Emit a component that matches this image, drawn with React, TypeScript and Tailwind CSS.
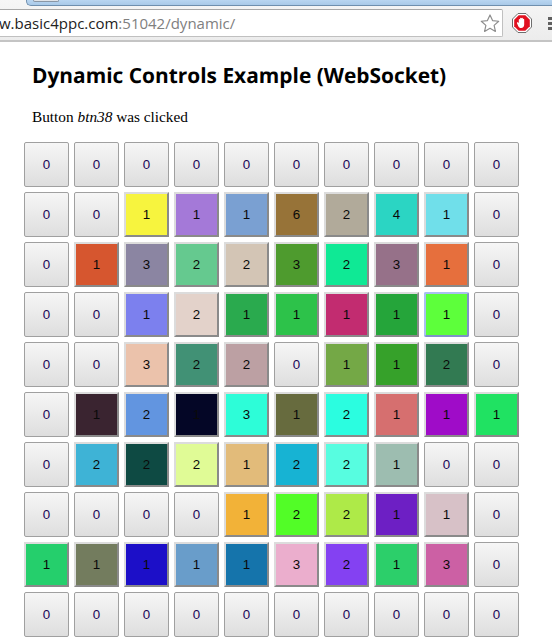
const Z = "";
const rows: [string, string][][] = [
  [["0", Z], ["0", Z], ["0", Z], ["0", Z], ["0", Z], ["0", Z], ["0", Z], ["0", Z], ["0", Z], ["0", Z]],
  [["0", Z], ["0", Z], ["1", "bg-[#f7f43e]"], ["1", "bg-[#a479d8]"], ["1", "bg-[#7aa0d2]"], ["6", "bg-[#977338]"], ["2", "bg-[#b1aa9a]"], ["4", "bg-[#2bd5c3]"], ["1", "bg-[#70dfea]"], ["0", Z]],
  [["0", Z], ["1", "bg-[#d6562f]"], ["3", "bg-[#8b85a2]"], ["2", "bg-[#65c98f]"], ["2", "bg-[#d3c5b5]"], ["3", "bg-[#4e9b2e]"], ["2", "bg-[#0fe995]"], ["3", "bg-[#967189]"], ["1", "bg-[#e66f3d]"], ["0", Z]],
  [["0", Z], ["0", Z], ["1", "bg-[#7c80ee]"], ["2", "bg-[#e3d2ca]"], ["1", "bg-[#2aaa4e]"], ["1", "bg-[#2dc24a]"], ["1", "bg-[#c22c70]"], ["1", "bg-[#25a53a]"], ["1", "bg-[#5dff3b]"], ["0", Z]],
  [["0", Z], ["0", Z], ["3", "bg-[#ebc2ab]"], ["2", "bg-[#419175]"], ["2", "bg-[#bca0a3]"], ["0", Z], ["1", "bg-[#74a846]"], ["1", "bg-[#36a12a]"], ["2", "bg-[#327a52]"], ["0", Z]],
  [["0", Z], ["1", "bg-[#3a2430]"], ["2", "bg-[#6295e0]"], ["1", "bg-[#040626]"], ["3", "bg-[#2dfdd8]"], ["1", "bg-[#676b3e]"], ["2", "bg-[#2bfde0]"], ["1", "bg-[#d66f6f]"], ["1", "bg-[#9f0cc8]"], ["1", "bg-[#20e262]"]],
  [["0", Z], ["2", "bg-[#3eb3d6]"], ["2", "bg-[#0e4a43]"], ["2", "bg-[#e0fb96]"], ["1", "bg-[#e2bb7a]"], ["2", "bg-[#17b3d3]"], ["2", "bg-[#57fde0]"], ["1", "bg-[#9dbdb0]"], ["0", Z], ["0", Z]],
  [["0", Z], ["0", Z], ["0", Z], ["0", Z], ["1", "bg-[#f2b238]"], ["2", "bg-[#52fd27]"], ["2", "bg-[#aeea48]"], ["1", "bg-[#6d1fc4]"], ["1", "bg-[#d7c1c7]"], ["0", Z]],
  [["1", "bg-[#25cf6c]"], ["1", "bg-[#737c5e]"], ["1", "bg-[#1c0fc8]"], ["1", "bg-[#699dca]"], ["1", "bg-[#1574ab]"], ["3", "bg-[#ebaecd]"], ["2", "bg-[#8441f2]"], ["1", "bg-[#2ccf6a]"], ["3", "bg-[#cc60a4]"], ["0", Z]],
  [["0", Z], ["0", Z], ["0", Z], ["0", Z], ["0", Z], ["0", Z], ["0", Z], ["0", Z], ["0", Z], ["0", Z]],
];

function Cell({ value, color, focused }: { value: string; color: string; focused: boolean }) {
  const base =
    "w-[45px] h-[45px] flex items-center justify-center text-[13.33px] font-['Liberation_Sans',sans-serif] ";
  if (!color) {
    return (
      <button className={base + "rounded-[2px] border border-[#a0a0a0] bg-gradient-to-b from-[#f6f6f6] to-[#dedede] text-[#1c0658]"}>
        {value}
      </button>
    );
  }
  const edge = focused
    ? "rounded-[2px] border-t-[#a9bff0] border-l-[#a9bff0] border-b-[#7f92c8] border-r-[#7f92c8]"
    : "border-t-[#dcdcdc] border-l-[#dcdcdc] border-b-[#8a8a8a] border-r-[#8a8a8a]";
  return <button className={base + "border-2 text-[#0a0a0a] " + edge + " " + color}>{value}</button>;
}

export default function App() {
  return (
    <div className="w-[552px] h-[643px] overflow-hidden bg-white">
      <header className="h-[42px] flex flex-col border-b-2 border-[#c4c4c4] bg-gradient-to-b from-[#f6f6f6] to-[#ececec]">
        <div className="h-[6px] pl-[26px] shrink-0">
          <div className="relative h-[6px] rounded-bl-[5px] border-l border-b border-[#6f8fae] bg-gradient-to-b from-[#b9d6f1] to-[#a9c9e8]">
            <div className="absolute left-[6px] top-0 w-[26px] h-[2px] rounded-b-[2px] bg-[#dfe3e8] border border-t-0 border-[#8a97a6]"></div>
          </div>
        </div>
        <div className="flex-1 flex items-center">
          <div className="w-[504px] h-[28px] bg-white border border-[#c0c0c0] border-t-[#a8a8a8] border-l-0 rounded-r-[2px] flex items-center overflow-hidden">
            <span className="text-[15px] whitespace-nowrap font-['Open_Sans',sans-serif] text-[#222222] -ml-[1px] flex-1">
              w.basic4ppc.com<span className="text-[#808080]">:51042/dynamic/</span>
            </span>
            <svg width="22" height="22" viewBox="0 0 24 22" className="mr-[1px] shrink-0">
              <path d="M12 2.2l2.8 6.2 6.7.7-5 4.5 1.4 6.6-5.900-3.400-5.900 3.400 1.400-6.600-5-4.500 6.700-.7z" fill="#ffffff" stroke="#8e8e8e" strokeWidth="1.3" strokeLinejoin="round" />
            </svg>
          </div>
          <svg width="20" height="20" viewBox="0 0 20 20" className="ml-[9px] shrink-0">
            <path d="M6 .5h8l5.500 5.500v8l-5.500 5.500H6L.5 14V6z" fill="#ffffff" stroke="#6e6e6e" strokeWidth="1" />
            <path d="M6.700 2.200h6.600l4.500 4.500v6.600l-4.500 4.500H6.700l-4.500-4.500V6.700z" fill="#e1101f" />
            <path d="M6.800 9.800V6.700c0-1 1.300-1 1.300 0V5.600c0-1 1.400-1 1.400 0v-.2c0-1 1.400-1 1.400 0v1c0-.9 1.300-.9 1.300 0v5.200c0 2.200-1.200 3.500-3 3.500-1.600 0-2.300-.8-3-2.200L5 10.300c-.4-.9.800-1.500 1.300-.6z" fill="#ffffff" />
          </svg>
          <div className="ml-[16px] w-[4px] flex flex-col gap-[2px] shrink-0">
            <div className="h-[3px] bg-[#606060]"></div>
            <div className="h-[3px] bg-[#606060]"></div>
            <div className="h-[3px] bg-[#606060]"></div>
          </div>
        </div>
      </header>
      <main className="pl-[24px]">
        <h1 className="pl-[8px] pt-[20px] h-[59px] text-[20.9px] leading-[29px] font-bold text-black font-['Open_Sans',sans-serif] whitespace-nowrap [text-rendering:geometricPrecision]">
          Dynamic Controls Example (WebSocket)
        </h1>
        <p className="pl-[8px] mt-[7px] h-[34px] text-[15.3px] leading-[18px] text-black font-['Liberation_Serif',serif]">
          Button <i>btn38</i> was clicked
        </p>
        <div className="grid grid-cols-[repeat(10,45px)] gap-[5px]">
          {rows.flatMap((r, i) =>
            r.map(([v, c], j) => <Cell key={`${i}-${j}`} value={v} color={c} focused={i === 3 && j === 8} />)
          )}
        </div>
      </main>
    </div>
  );
}
